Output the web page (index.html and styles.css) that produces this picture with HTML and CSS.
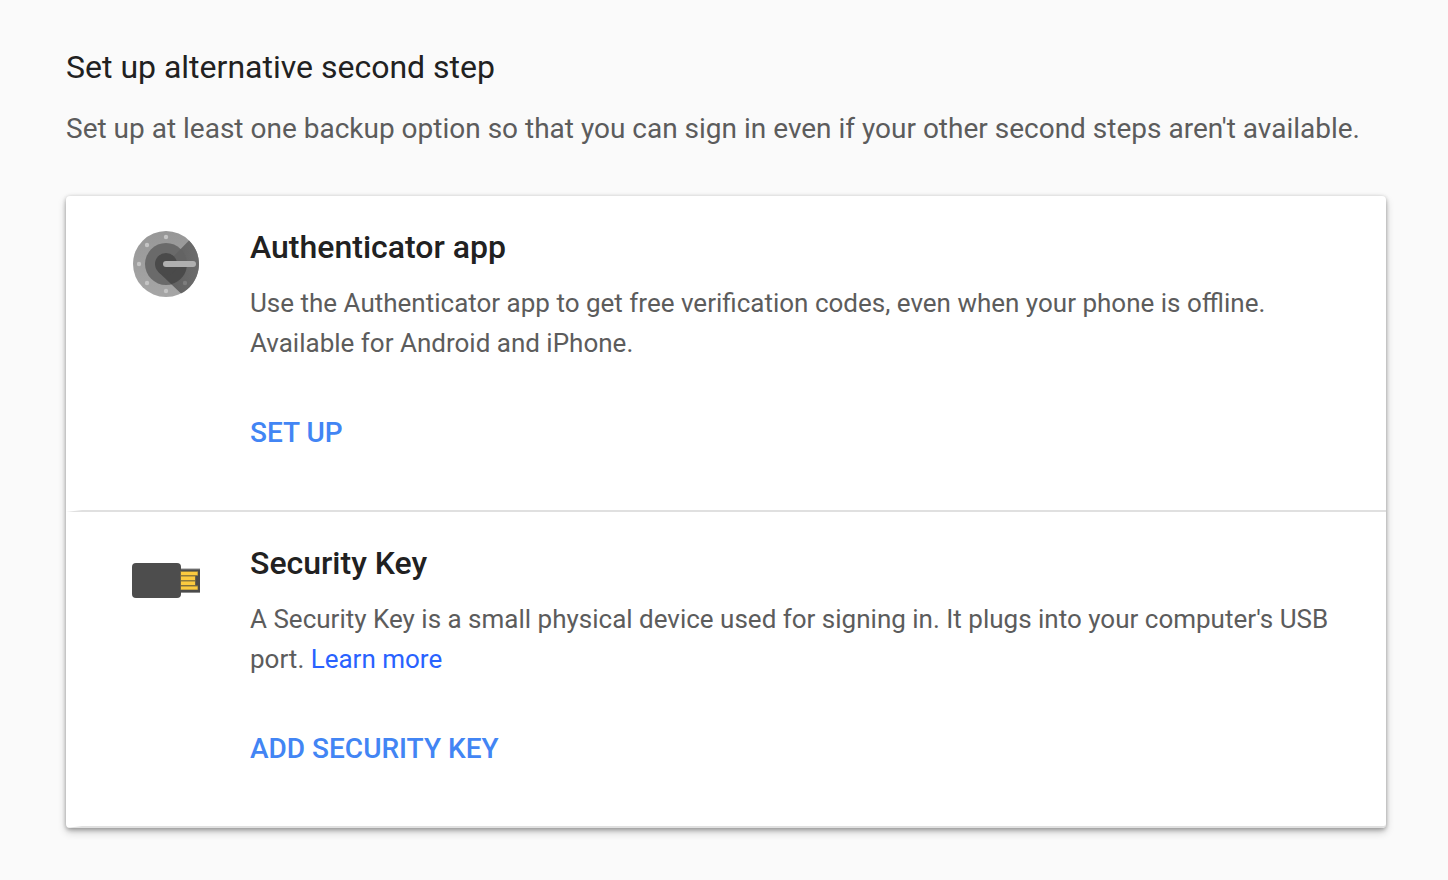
FILE: index.html
```html
<!DOCTYPE html>
<html lang="en">
<head>
  <meta charset="UTF-8">
  <meta name="viewport" content="width=device-width, initial-scale=1.0">
  <title>2-Step Verification</title>
  <link rel="stylesheet" href="styles.css">
</head>
<body>
  <main class="page">
    <h1>Set up alternative second step</h1>
    <p class="intro">Set up at least one backup option so that you can sign in even if your other second steps aren't available.</p>

    <div class="card">
      <section class="option">
        <svg class="icon" viewBox="0 0 68 68" aria-hidden="true">
          <defs>
            <linearGradient id="ring" x1="0" y1="0" x2="0" y2="1">
              <stop offset="0" stop-color="#979797"/>
              <stop offset="1" stop-color="#a6a6a6"/>
            </linearGradient>
            <linearGradient id="wedge" x1="0" y1="0" x2="1" y2="0">
              <stop offset="0" stop-color="#5c5c5c"/>
              <stop offset="1" stop-color="#6c6c6c"/>
            </linearGradient>
          </defs>
          <circle cx="34" cy="34" r="33" fill="url(#ring)"/>
          <path d="M34 34 L57 10.500 A33 33 0 0 1 49 63.500 L26.200 41.800 Z" fill="url(#wedge)"/>
          <circle cx="34" cy="34" r="21" fill="#6a6a6a"/>
          <path d="M34 34 L48.800 19 A21 21 0 0 1 55 34 Z" fill="#636363"/>
          <path d="M26.200 41.800 L39.300 54.300 A21 21 0 0 0 55 34 H34 Z" fill="#4a4a4a"/>
          <circle cx="34" cy="34" r="11" fill="#4a4a4a"/>
          <g fill="#c4c4c4">
            <circle cx="34" cy="7" r="2.200"/>
            <circle cx="15" cy="15" r="2.200"/>
            <circle cx="7" cy="34" r="2.200"/>
            <circle cx="15" cy="53" r="2.200"/>
            <circle cx="34" cy="61" r="2.200"/>
          </g>
          <circle cx="53" cy="53" r="2.200" fill="#7d7d7d"/>
          <rect x="31" y="31" width="33" height="6" rx="3" fill="#b0b0b0"/>
        </svg>
        <div class="details">
          <h2>Authenticator app</h2>
          <p>Use the Authenticator app to get free verification codes, even when your phone is offline. Available for Android and iPhone.</p>
          <button type="button">SET UP</button>
        </div>
      </section>

      <section class="option">
        <svg class="icon" viewBox="0 0 68 68" aria-hidden="true">
          <rect x="48" y="22.500" width="20" height="24.500" fill="#8c8c8c"/>
          <rect x="48" y="23.500" width="20" height="22.500" fill="#4b4b4b"/>
          <rect x="0" y="17" width="49" height="35" rx="4" fill="#4d4d4d"/>
          <g fill="#8f7b3c">
            <rect x="48.500" y="25" width="17.500" height="5"/>
            <rect x="48.500" y="29.500" width="15" height="10"/>
            <rect x="48.500" y="39.500" width="17.500" height="4.500"/>
          </g>
          <g fill="#fbca3f">
            <rect x="49" y="26" width="16.500" height="3"/>
            <rect x="49" y="30.500" width="14" height="3.500"/>
            <rect x="49" y="35.500" width="14" height="3.500"/>
            <rect x="49" y="40.500" width="16.500" height="3"/>
          </g>
        </svg>
        <div class="details">
          <h2>Security Key</h2>
          <p>A Security Key is a small physical device used for signing in. It plugs into your computer's USB port. <a href="#">Learn more</a></p>
          <button type="button">ADD SECURITY KEY</button>
        </div>
      </section>
    </div>
  </main>
</body>
</html>
```
FILE: styles.css
```css
body {
  margin: 0;
  background: #fafafa;
  color: #212121;
  font-family: Roboto, sans-serif;
}

.page {
  padding: 46px 62px 52px 66px;
}

h1 {
  margin: 0;
  font-size: 32px;
  font-weight: 400;
  line-height: 42px;
}

.intro {
  margin: 20px 0 46px;
  color: #5c5c5c;
  font-size: 28px;
  line-height: 42px;
}

.card {
  background: #fff;
  border-radius: 4px;
  box-shadow: 0 0 4px rgba(0, 0, 0, 0.08), 0 2px 4px rgba(0, 0, 0, 0.24), 0 4px 8px rgba(0, 0, 0, 0.2);
}

/* the transparent left border tapers the divider at its start */
.option {
  display: flex;
  gap: 50px;
  padding: 30px 56px 52px 50px;
  border-bottom: 2px solid #e0e0e0;
  border-left: 16px solid transparent;
}

.option:last-child {
  border-bottom-right-radius: 4px;
}

.icon {
  flex: none;
  width: 68px;
  height: 68px;
  margin-top: 4px;
}

h2 {
  margin: 0;
  font-size: 32px;
  font-weight: 500;
  line-height: 42px;
}

.details p {
  margin: 15px 0 45px;
  color: #5c5c5c;
  font-size: 26px;
  line-height: 40px;
}

a {
  color: #2962ff;
  text-decoration: none;
}

button {
  padding: 0;
  border: none;
  background: none;
  color: #4285f4;
  font-family: inherit;
  font-size: 28px;
  font-weight: 500;
  line-height: 50px;
  cursor: pointer;
}
```
